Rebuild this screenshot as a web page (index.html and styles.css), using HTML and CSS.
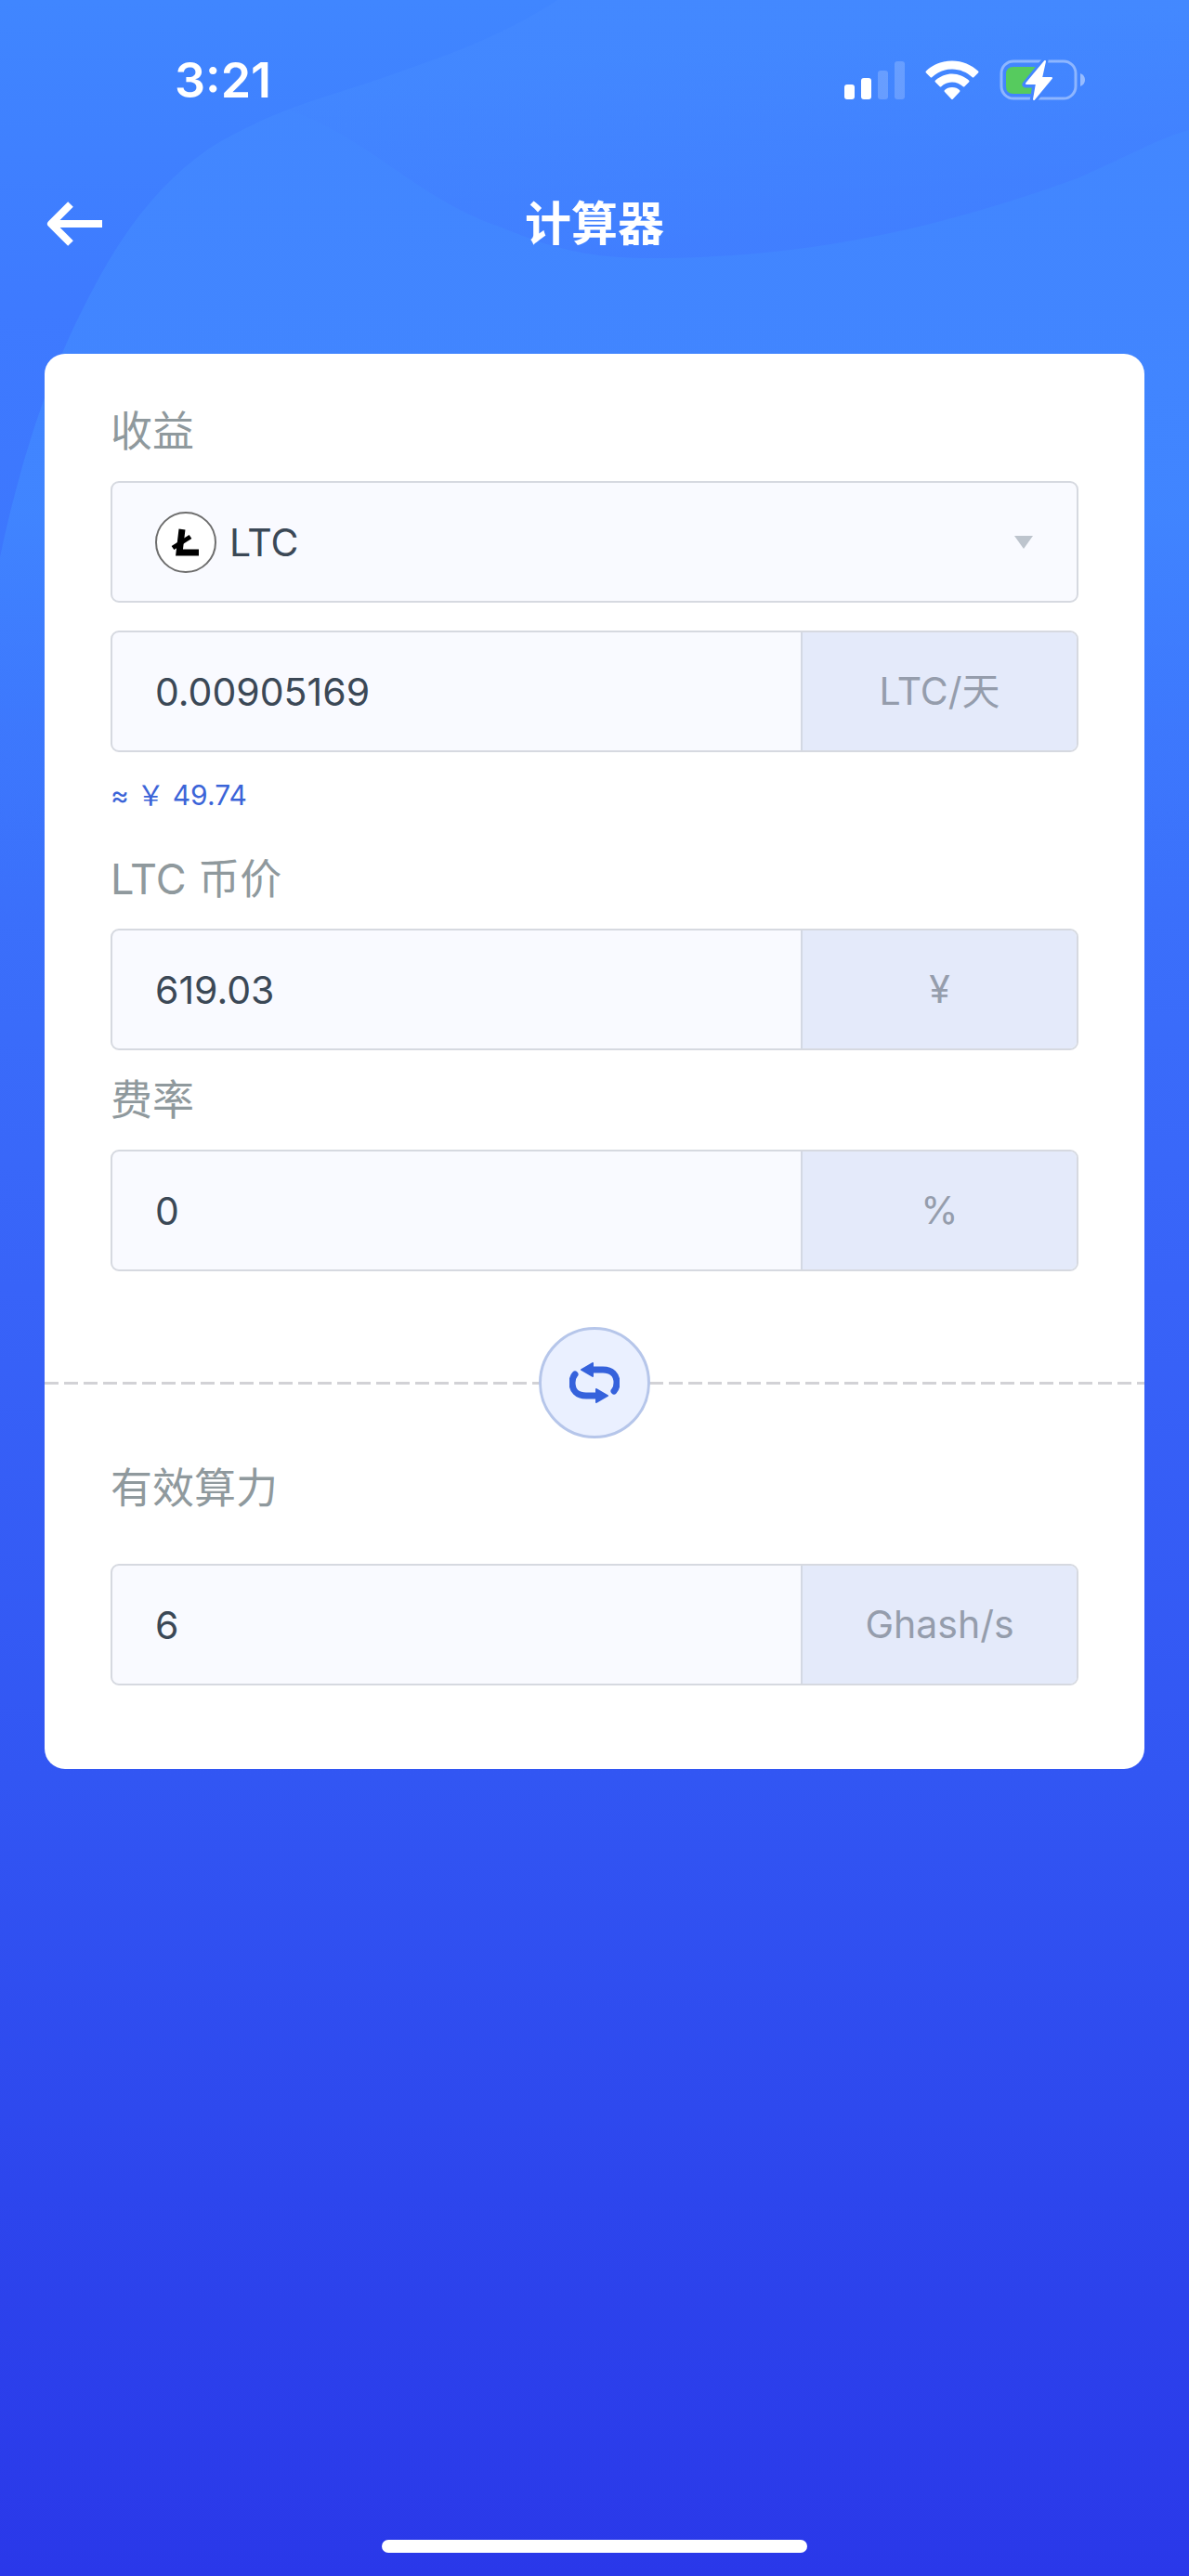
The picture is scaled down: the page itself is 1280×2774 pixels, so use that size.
FILE: index.html
```html
<!DOCTYPE html>
<html lang="zh-CN">
<head>
    <meta charset="UTF-8">
    <meta name="viewport" content="width=device-width, initial-scale=1.0">
    <title>计算器</title>
    <link rel="stylesheet" href="styles.css">
</head>
<body>

    <svg class="waves" viewBox="0 0 1280 1000" preserveAspectRatio="none" aria-hidden="true">
        <defs>
            <linearGradient id="waveFill" x1="0" y1="0" x2="0" y2="1">
                <stop offset="0" stop-color="#4489ff" stop-opacity="0.75"/>
                <stop offset="0.55" stop-color="#4187ff" stop-opacity="0.85"/>
                <stop offset="1" stop-color="#3c74fc" stop-opacity="0"/>
            </linearGradient>
            <linearGradient id="waveShade" x1="0" y1="0" x2="0.3" y2="1">
                <stop offset="0.3" stop-color="#4078ff" stop-opacity="0"/>
                <stop offset="1" stop-color="#4078ff" stop-opacity="0.5"/>
            </linearGradient>
        </defs>
        <path fill="url(#waveFill)" d="M600 0C540 40 480 60 400 88C340 108 290 120 225 160C160 205 120 270 88 335C60 390 25 480 0 600V1000H1280V0Z"/>
        <path fill="url(#waveShade)" d="M600 0C540 40 480 60 400 88L310 118C400 150 450 215 540 245C600 270 640 278 700 278C860 278 1000 250 1160 192C1210 170 1245 150 1280 140V0Z"/>
    </svg>

    <div class="status-bar">
        <span class="time">3:21</span>
        <div class="status-icons">
            <svg width="65" height="44" viewBox="0 0 65 44" fill="#fff">
                <rect x="0" y="26" width="11" height="16" rx="3"/>
                <rect x="18" y="19" width="11" height="23" rx="3"/>
                <rect x="36" y="11" width="11" height="31" rx="3" opacity="0.2"/>
                <rect x="54" y="1" width="11" height="41" rx="3" opacity="0.2"/>
            </svg>
            <svg width="58" height="44" viewBox="0 0 58 44" fill="#fff">
                <path d="M29 0.500C18 0.500 8 5 1 11.500Q0 12.500 1 13.500L5.500 18Q6.500 19 7.500 18C13 13 20.500 9.500 29 9.500C37.500 9.500 45 13 50.500 18Q51.500 19 52.500 18L57 13.500Q58 12.500 57 11.500C50 5 40 0.500 29 0.500Z"/>
                <path d="M29 14.500C22 14.500 16 17.500 11 21.500Q10 22.500 11 23.500L15.500 28Q16.500 29 17.500 28C20.500 25.500 24.500 23.500 29 23.500C33.500 23.500 37.500 25.500 40.500 28Q41.500 29 42.500 28L47 23.500Q48 22.500 47 21.500C42 17.500 36 14.500 29 14.500Z"/>
                <path d="M29 29C25.500 29 23 30 21 32Q20 33 21 34L28 41.500Q29 42.500 30 41.500L37 34Q38 33 37 32C35 30 32.500 29 29 29Z"/>
            </svg>
            <svg width="94" height="46" viewBox="0 0 94 46">
                <mask id="boltGap">
                    <rect width="94" height="46" fill="#fff"/>
                    <path d="M49 1L28 27H39L36 45L57 19H46Z" fill="#000" stroke="#000" stroke-width="7" stroke-linejoin="round"/>
                </mask>
                <g mask="url(#boltGap)">
                    <rect x="2" y="2" width="80" height="40" rx="13" fill="none" stroke="#fff" stroke-opacity="0.4" stroke-width="3"/>
                    <path d="M15 8H44V37H15Q7 37 7 29V16Q7 8 15 8Z" fill="#56cb5e"/>
                </g>
                <path d="M87 15Q92 17 92 22T87 29Z" fill="#fff" opacity="0.45"/>
                <path d="M49 2L29 26H40L37 43L56 20H45Z" fill="#fff" stroke="#fff" stroke-width="2" stroke-linejoin="round"/>
            </svg>
        </div>
    </div>

    <header class="nav">
        <a class="back" href="#" aria-label="返回">
            <svg width="60" height="48" viewBox="0 0 60 48" fill="none" stroke="#fff" stroke-width="8" stroke-linejoin="round">
                <path d="M26 3L5 24L26 45"/>
                <path d="M6 24H60"/>
            </svg>
        </a>
        <h1>计算器</h1>
    </header>

    <form class="card">
        <label class="label" for="coin">收益</label>
        <div class="field coin-field">
            <svg class="coin-icon" width="66" height="66" viewBox="0 0 66 66">
                <circle cx="33" cy="33" r="32" fill="#fff" stroke="#6e6e6e" stroke-width="2"/>
                <path d="M29 19L26 44H47" fill="none" stroke="#000" stroke-width="7"/>
                <path d="M19 39L38 27" stroke="#000" stroke-width="5"/>
            </svg>
            <select id="coin">
                <option>LTC</option>
            </select>
            <svg class="caret" width="20" height="14" viewBox="0 0 20 14">
                <path d="M0 0H20L10 14Z" fill="#bdc4cd"/>
            </svg>
        </div>

        <div class="field">
            <input id="income" type="text" value="0.00905169" aria-label="收益">
            <span class="unit">LTC/天</span>
        </div>
        <p class="approx">≈ ￥ 49.74</p>

        <label class="label" for="price">LTC 币价</label>
        <div class="field">
            <input id="price" type="text" value="619.03">
            <span class="unit">¥</span>
        </div>

        <label class="label" for="fee">费率</label>
        <div class="field">
            <input id="fee" type="text" value="0">
            <span class="unit">%</span>
        </div>

        <div class="divider">
            <button class="swap" type="button" aria-label="切换">
                <svg width="54" height="44" viewBox="0 0 54 44">
                    <g id="swapArrow">
                        <path d="M25 8H36C46 8 51 14 51 22C51 26 50 29 48 31" fill="none" stroke="#3562dc" stroke-width="7" stroke-linecap="round"/>
                        <path d="M13 8L25 1V15Z" fill="#3562dc" stroke="#3562dc" stroke-width="2" stroke-linejoin="round"/>
                    </g>
                    <use href="#swapArrow" transform="rotate(180 27 22)"/>
                </svg>
            </button>
        </div>

        <label class="label label-power" for="power">有效算力</label>
        <div class="field">
            <input id="power" type="text" value="6">
            <span class="unit">Ghash/s</span>
        </div>
    </form>

    <div class="home-indicator"></div>

</body>
</html>
```

FILE: styles.css
```css
* {
    box-sizing: border-box;
}

body {
    font-family: Inter, "Noto Sans CJK SC", sans-serif;
    background: linear-gradient(180deg, #4086ff 0%, #3e7aff 12%, #3c74fc 30%, #3863f8 50%, #3256f3 69%, #2d46ed 85%, #2a38e9 100%);
    position: relative;
    display: flex;
    flex-direction: column;
    min-height: 100vh;
    margin: 0;
}

.waves {
    position: absolute;
    top: 0;
    left: 0;
    width: 100%;
    height: 1000px;
    z-index: -1;
}

.status-bar {
    display: flex;
    align-items: center;
    justify-content: space-between;
    height: 174px;
    padding: 0 110px 0 188px;
}

.time {
    color: #fff;
    font-size: 52px;
    font-weight: 600;
    line-height: 64px;
}

.status-icons {
    display: flex;
    align-items: center;
    gap: 22px;
}

.nav {
    display: grid;
    grid-template-columns: 60px 1fr 60px;
    align-items: center;
    height: 134px;
    padding: 0 50px;
}

.back {
    display: flex;
}

h1 {
    margin: 0;
    color: #fff;
    font-size: 50px;
    font-weight: 700;
    line-height: 72px;
    text-align: center;
}

.card {
    margin: 73px 48px 0;
    padding: 30px 71px 90px;
    background: #fff;
    border-radius: 22px;
}

.label {
    display: block;
    color: #8f999d;
    font-size: 45px;
    line-height: 107px;
}

.label-power {
    margin-bottom: 28px;
}

.field {
    display: flex;
    height: 131px;
    background: #f9faff;
    border: 2px solid #d6d9e0;
    border-radius: 9px;
    overflow: hidden;
}

.field input,
.field select {
    flex: 1;
    min-width: 0;
    padding: 0 46px;
    border: none;
    outline: none;
    background: transparent;
    color: #3b4856;
    font-family: inherit;
    font-size: 41px;
}

.coin-field {
    align-items: center;
    margin-bottom: 30px;
    padding: 0 47px 0 46px;
}

.field select {
    height: 100%;
    padding: 0 14px;
    appearance: none;
}

.caret {
    pointer-events: none;
}

.unit {
    width: 297px;
    background: #e4eafa;
    border-left: 2px solid #d3d8e3;
    color: #959dac;
    font-size: 41px;
    line-height: 127px;
    text-align: center;
}

.approx {
    margin: 0;
    padding-top: 10px;
    color: #3b64d8;
    font-size: 30px;
    line-height: 73px;
}

.divider {
    display: flex;
    justify-content: center;
    margin: 60px -71px 0;
    background: repeating-linear-gradient(90deg, #d2d2d6 0 15px, transparent 15px 21px) center / 100% 3px no-repeat;
}

.swap {
    display: flex;
    align-items: center;
    justify-content: center;
    width: 120px;
    height: 120px;
    padding: 0;
    background: #eaf0ff;
    border: 3px solid #b6c6ea;
    border-radius: 50%;
    cursor: pointer;
}

.home-indicator {
    width: 458px;
    height: 14px;
    margin: auto auto 25px;
    background: #fff;
    border-radius: 7px;
}
```
